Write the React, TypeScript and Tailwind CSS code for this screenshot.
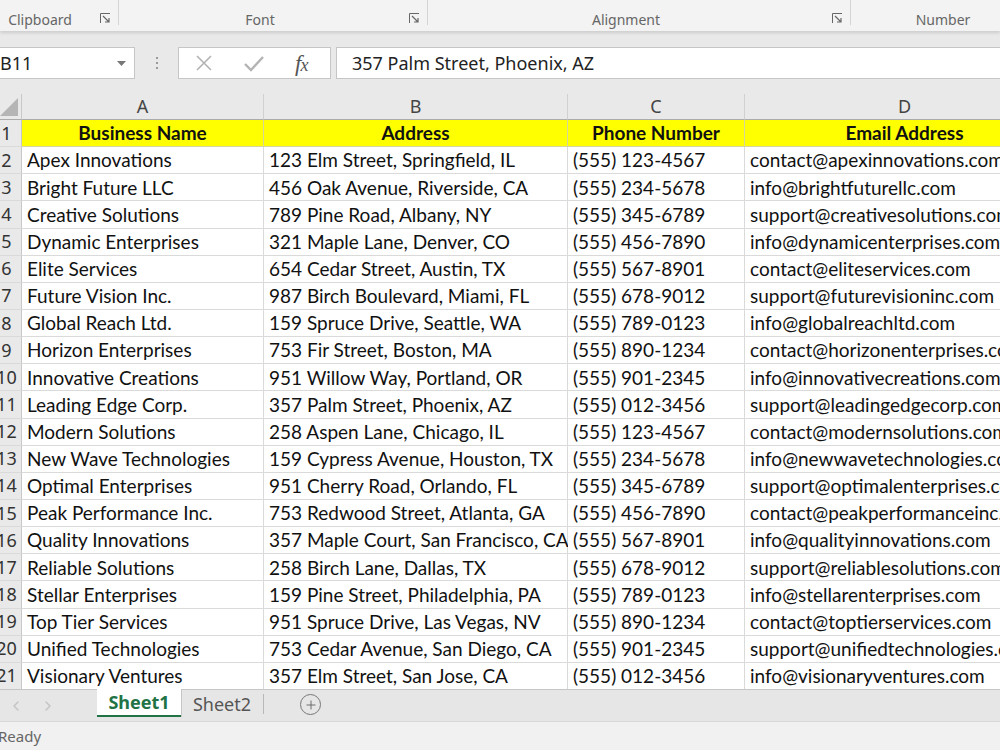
import { Plus, ChevronLeft, ChevronRight } from "lucide-react";

// Sheet contents, row 2..21
const rows = [
  ["Apex Innovations", "123 Elm Street, Springfield, IL", "(555) 123-4567", "contact@apexinnovations.com"],
  ["Bright Future LLC", "456 Oak Avenue, Riverside, CA", "(555) 234-5678", "info@brightfuturellc.com"],
  ["Creative Solutions", "789 Pine Road, Albany, NY", "(555) 345-6789", "support@creativesolutions.com"],
  ["Dynamic Enterprises", "321 Maple Lane, Denver, CO", "(555) 456-7890", "info@dynamicenterprises.com"],
  ["Elite Services", "654 Cedar Street, Austin, TX", "(555) 567-8901", "contact@eliteservices.com"],
  ["Future Vision Inc.", "987 Birch Boulevard, Miami, FL", "(555) 678-9012", "support@futurevisioninc.com"],
  ["Global Reach Ltd.", "159 Spruce Drive, Seattle, WA", "(555) 789-0123", "info@globalreachltd.com"],
  ["Horizon Enterprises", "753 Fir Street, Boston, MA", "(555) 890-1234", "contact@horizonenterprises.com"],
  ["Innovative Creations", "951 Willow Way, Portland, OR", "(555) 901-2345", "info@innovativecreations.com"],
  ["Leading Edge Corp.", "357 Palm Street, Phoenix, AZ", "(555) 012-3456", "support@leadingedgecorp.com"],
  ["Modern Solutions", "258 Aspen Lane, Chicago, IL", "(555) 123-4567", "contact@modernsolutions.com"],
  ["New Wave Technologies", "159 Cypress Avenue, Houston, TX", "(555) 234-5678", "info@newwavetechnologies.com"],
  ["Optimal Enterprises", "951 Cherry Road, Orlando, FL", "(555) 345-6789", "support@optimalenterprises.com"],
  ["Peak Performance Inc.", "753 Redwood Street, Atlanta, GA", "(555) 456-7890", "contact@peakperformanceinc.com"],
  ["Quality Innovations", "357 Maple Court, San Francisco, CA", "(555) 567-8901", "info@qualityinnovations.com"],
  ["Reliable Solutions", "258 Birch Lane, Dallas, TX", "(555) 678-9012", "support@reliablesolutions.com"],
  ["Stellar Enterprises", "159 Pine Street, Philadelphia, PA", "(555) 789-0123", "info@stellarenterprises.com"],
  ["Top Tier Services", "951 Spruce Drive, Las Vegas, NV", "(555) 890-1234", "contact@toptierservices.com"],
  ["Unified Technologies", "753 Cedar Avenue, San Diego, CA", "(555) 901-2345", "support@unifiedtechnologies.com"],
  ["Visionary Ventures", "357 Elm Street, San Jose, CA", "(555) 012-3456", "info@visionaryventures.com"],
];

const headers = ["Business Name", "Address", "Phone Number", "Email Address"];

const cols = "grid grid-cols-[30px_242px_304px_177px_320px]";

function Launcher() {
  return (
    <svg width="11" height="11" viewBox="0 0 11 11" className="text-[#666]">
      <path d="M0.5 10V0.5H10" fill="none" stroke="currentColor" strokeWidth="1" />
      <path d="M3 3L9 9M9 5V9H5" fill="none" stroke="currentColor" strokeWidth="1.2" />
    </svg>
  );
}

function RibbonGroup({ label, width, launcher = true, sep = true, extra = "" }: { label: string; width: string; launcher?: boolean; sep?: boolean; extra?: string }) {
  return (
    <div className={`flex h-[31px] shrink-0 ${width} ${extra}`}>
      <div className="flex-1 flex items-end justify-center pb-[2px] text-[14px] leading-[18px] text-[#666]">{label}</div>
      <div className="w-[26px] flex items-end justify-center pb-[7px]">{launcher && <Launcher />}</div>
      {sep && <div className="w-px h-[25px] bg-[#d4d4d4]" />}
    </div>
  );
}

export default function App() {
  return (
    <div className="w-[1000px] h-[750px] overflow-hidden flex flex-col bg-[#e9e9e9] font-['Noto_Sans',sans-serif]">
      {/* Ribbon group labels */}
      <div className="h-[31px] shrink-0 bg-[#f3f3f3] flex shadow-[0_2px_3px_rgba(0,0,0,0.12)] relative z-10">
        <RibbonGroup label="Clipboard" width="w-[131px]" extra="ml-[-12px]" />
        <RibbonGroup label="Font" width="w-[309px]" />
        <RibbonGroup label="Alignment" width="w-[423px]" />
        <RibbonGroup label="Number" width="w-[210px]" launcher={false} sep={false} />
      </div>

      {/* Formula bar */}
      <div className="h-[63px] shrink-0 pt-[16px] flex items-start">
        <div className="w-[135px] h-[32px] bg-white border border-[#c6c6c6] border-l-0 flex items-center justify-between pr-[8px]">
          <span className="text-[18px] text-[#222] leading-none">B11</span>
          <svg width="9" height="5" viewBox="0 0 9 5"><path d="M0 0H9L4.5 5Z" fill="#777" /></svg>
        </div>
        <div className="w-[43px] h-[32px] flex flex-col items-center justify-center gap-[3px]">
          <span className="w-[2px] h-[2px] bg-[#9a9a9a]" />
          <span className="w-[2px] h-[2px] bg-[#9a9a9a]" />
          <span className="w-[2px] h-[2px] bg-[#9a9a9a]" />
        </div>
        <div className="w-[153px] h-[32px] bg-white border border-[#c6c6c6] flex items-center">
          <svg width="20" height="20" viewBox="0 0 20 20" className="ml-[15px]">
            <path d="M3 3L17 17M17 3L3 17" stroke="#b3b3b3" strokeWidth="1.6" />
          </svg>
          <svg width="22" height="20" viewBox="0 0 22 20" className="ml-[29px]">
            <path d="M2 11L8 17L20 4" fill="none" stroke="#b3b3b3" strokeWidth="2.4" />
          </svg>
          <span className="ml-[30px] text-[23px] italic text-[#555] font-['Liberation_Serif',serif] leading-none tracking-[-1px]">
            f<span className="text-[18px]">x</span>
          </span>
        </div>
        <div className="ml-[5px] flex-1 h-[32px] bg-white border border-[#c6c6c6] border-r-0 flex items-center pl-[15px]">
          <span className="text-[18px] text-[#222] leading-none">357 Palm Street, Phoenix, AZ</span>
        </div>
      </div>

      {/* Sheet grid */}
      <div className="flex-1 overflow-hidden">
        <div className={`${cols} ml-[-8px] font-['Lato',sans-serif]`}>
          {/* column headers */}
          <div className="h-[26px] bg-[#e9e9e9] border-b border-[#ababab] border-r border-r-[#c8c8c8] flex items-end justify-end">
            <svg width="18" height="18" viewBox="0 0 18 18" className="mb-[3px] mr-[3px]">
              <path d="M18 0V18H0Z" fill="#b5b5b5" />
            </svg>
          </div>
          {["A", "B", "C", "D"].map((c) => (
            <div
              key={c}
              className="h-[26px] bg-[#e9e9e9] border-b border-[#ababab] border-r border-r-[#d0d0d0] flex items-center justify-center text-[18px] text-[#444] font-['Noto_Sans',sans-serif]"
            >
              {c}
            </div>
          ))}

          {/* header row 1 */}
          <div className="h-[27.15px] bg-[#e9e9e9] border-r border-[#c8c8c8] border-b border-b-[#dadada] flex items-center justify-center text-[18px] text-[#333] font-['Noto_Sans',sans-serif]">
            1
          </div>
          {headers.map((h) => (
            <div
              key={h}
              className="h-[27.15px] bg-[#ffff00] border-r border-b border-[#d6d6a0] flex items-center justify-center pt-[1px] text-[19px] font-bold text-[#111] whitespace-nowrap overflow-hidden"
            >
              {h}
            </div>
          ))}

          {rows.map((r, i) => (
            <div key={i} className="contents">
              <div className="h-[27.15px] bg-[#e9e9e9] border-r border-[#c8c8c8] border-b border-b-[#dadada] flex items-center justify-center text-[18px] text-[#333] font-['Noto_Sans',sans-serif]">
                {i + 2}
              </div>
              {r.map((v, j) => (
                <div
                  key={j}
                  className="h-[27.15px] bg-white border-r border-b border-[#dadada] flex items-center pl-[5px] pt-[1px] text-[19px] text-[#111] whitespace-nowrap overflow-visible"
                >
                  {v}
                </div>
              ))}
            </div>
          ))}
        </div>
      </div>

      {/* Sheet tabs */}
      <div className="h-[32px] shrink-0 bg-[#e6e6e6] border-t border-[#c6c6c6] flex items-start">
        <div className="w-[97px] h-full flex items-center pl-[8px] gap-[16px] text-[#c2c2c2]">
          <ChevronLeft size={16} strokeWidth={2} />
          <ChevronRight size={16} strokeWidth={2} />
        </div>
        <div className="w-[84px] h-[28px] mt-[-1px] bg-white border-b-2 border-[#217346] flex items-center justify-center text-[18px] font-bold text-[#217346] shadow-[1px_0_0_#c6c6c6]">
          Sheet1
        </div>
        <div className="w-[82px] h-[28px] flex items-center justify-center text-[18px] text-[#555]">Sheet2</div>
        <div className="w-px h-[20px] mt-[4px] bg-[#b8b8b8]" />
        <div className="ml-[36px] mt-[4px] w-[21px] h-[21px] rounded-full border border-[#777] flex items-center justify-center text-[#666]">
          <Plus size={14} strokeWidth={1.6} />
        </div>
      </div>

      {/* Status bar */}
      <div className="h-[29px] shrink-0 bg-[#f1f1f1] border-t border-[#d8d8d8] flex items-center">
        <span className="text-[15px] text-[#666] ml-[-2px]">Ready</span>
      </div>
    </div>
  );
}
